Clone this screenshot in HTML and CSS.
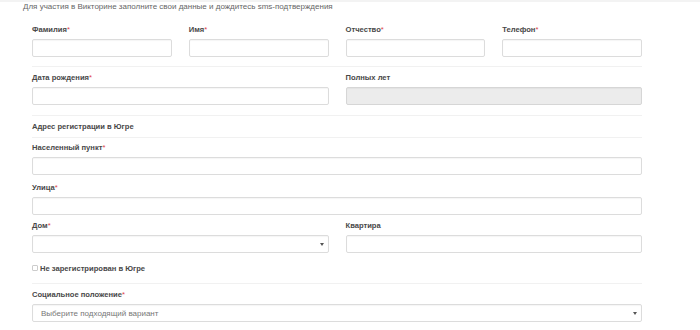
FILE: index.html
```html
<!DOCTYPE html>
<html lang="ru">
<head>
  <meta charset="UTF-8">
  <meta name="viewport" content="width=device-width, initial-scale=1">
  <title>Викторина – регистрация</title>
  <link rel="stylesheet" href="styles.css">
</head>
<body>
  <p class="intro">Для участия в Викторине заполните свои данные и дождитесь sms-подтверждения</p>

  <form class="quiz-form">
    <div class="row cols-4">
      <div class="field">
        <label>Фамилия<span class="req">*</span></label>
        <input type="text">
      </div>
      <div class="field">
        <label>Имя<span class="req">*</span></label>
        <input type="text">
      </div>
      <div class="field">
        <label>Отчество<span class="req">*</span></label>
        <input type="text">
      </div>
      <div class="field">
        <label>Телефон<span class="req">*</span></label>
        <input type="text">
      </div>
    </div>

    <hr class="sep">

    <div class="row cols-2">
      <div class="field">
        <label>Дата рождения<span class="req">*</span></label>
        <input type="text">
      </div>
      <div class="field">
        <label>Полных лет</label>
        <input type="text" disabled>
      </div>
    </div>

    <hr class="sep sep-wide">

    <div class="section-title">Адрес регистрации в Югре</div>

    <hr class="sep sep-title">

    <div class="field">
      <label>Населенный пункт<span class="req">*</span></label>
      <input type="text">
    </div>

    <div class="field field-tight">
      <label>Улица<span class="req">*</span></label>
      <input type="text">
    </div>

    <div class="row cols-2">
      <div class="field">
        <label>Дом<span class="req">*</span></label>
        <div class="select-wrap">
          <select><option></option></select>
        </div>
      </div>
      <div class="field">
        <label>Квартира</label>
        <input type="text">
      </div>
    </div>

    <label class="check"><input type="checkbox"> Не зарегистрирован в Югре</label>

    <hr class="sep sep-check">

    <div class="field">
      <label>Социальное положение<span class="req">*</span></label>
      <div class="select-wrap">
        <select class="placeholder"><option>Выберите подходящий вариант</option></select>
      </div>
    </div>
  </form>
</body>
</html>
```

FILE: styles.css
```css
body {
  font-family: "Liberation Sans", Arial, sans-serif;
  margin: 0;
  background: white;
  border-top: 2px solid #f3f3f3;
  color: #444;
}
.intro {
  margin: 0 0 0 23px;
  font-size: 8px;
  line-height: 10px;
  color: #666;
}
.quiz-form {
  width: 610px;
  margin: 13px 0 0 32px;
}
.row {
  display: grid;
  column-gap: 17px;
}
.cols-4 {
  grid-template-columns: repeat(4, 1fr);
}
.cols-2 {
  grid-template-columns: repeat(2, 1fr);
}
.field {
  margin-bottom: 8px;
}
.field-tight {
  margin-bottom: 6px;
}
.row .field {
  margin-bottom: 0;
}
.field label {
  display: block;
  font-size: 7.6px;
  line-height: 10px;
  font-weight: bold;
  color: #484848;
  margin-bottom: 4px;
}
.req {
  color: #e0444a;
  font-weight: normal;
}
.field input,
.field select {
  display: block;
  box-sizing: border-box;
  width: 100%;
  height: 18px;
  margin: 0;
  padding: 0 8px;
  border: 1px solid #dcdcdc;
  border-radius: 2px;
  background: white;
  box-shadow: inset 0 1px 1px rgba(0,0,0,0.04);
  font-family: inherit;
  font-size: 8px;
  color: #555;
  -webkit-appearance: none;
  appearance: none;
}
.field input:disabled {
  background: #ececec;
  border-color: #d6d6d6;
}
.select-wrap {
  position: relative;
}
.select-wrap::after {
  content: "";
  position: absolute;
  right: 5px;
  top: 8px;
  border-left: 2px solid transparent;
  border-right: 2px solid transparent;
  border-top: 3px solid #555;
}
.field select.placeholder {
  color: #777;
}
.sep {
  border: none;
  border-top: 1px solid #f1f1f1;
  margin: 9px 0 6px;
}
.sep-wide {
  margin: 10px 0 6px;
}
.section-title {
  font-size: 7.6px;
  line-height: 10px;
  font-weight: bold;
  color: #484848;
}
.sep-title {
  margin: 5px 0 5px;
}
.check {
  display: flex;
  align-items: center;
  gap: 2px;
  margin-top: 10px;
  height: 10px;
  font-size: 7.6px;
  font-weight: bold;
  color: #484848;
}
.check input {
  width: 6px;
  height: 6px;
  margin: 0;
  border: 1px solid #ccc;
  border-radius: 1px;
  -webkit-appearance: none;
  appearance: none;
}
.sep-check {
  margin: 10px 0 6px;
}
```
